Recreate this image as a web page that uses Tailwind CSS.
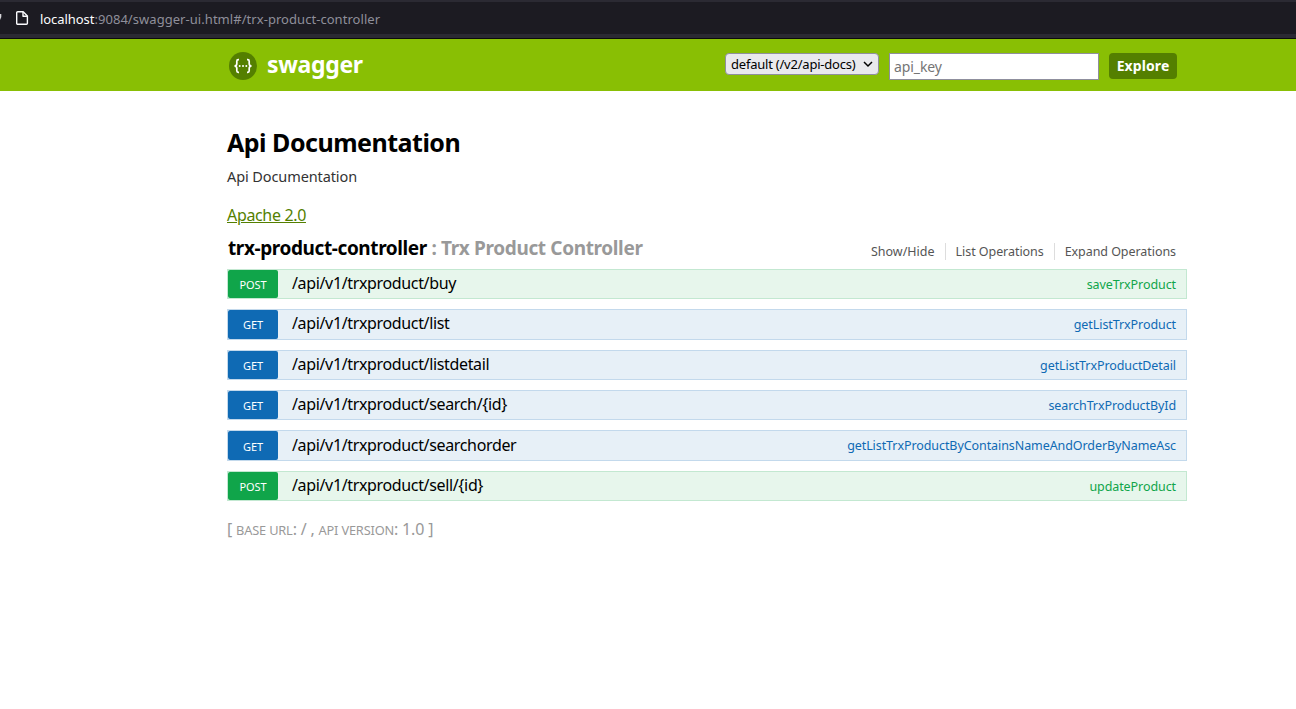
<!DOCTYPE html>
<html lang="en">
<head>
<meta charset="utf-8">
<title>Swagger UI</title>
<script src="https://cdn.jsdelivr.net/npm/@tailwindcss/browser@4"></script>
</head>
<body class="bg-white font-['Noto_Sans',sans-serif] text-black overflow-hidden">
  <!-- Browser address bar -->
  <div class="h-[39px] bg-[#2b2a33] border-b border-[#0c0c0d] pt-0.5">
    <div class="h-8 bg-[#1c1b22] flex items-center">
      <svg class="w-[2px] h-8 shrink-0" viewBox="0 0 2 32"><path d="M0 12h1.300v3L0 18z" fill="#d5d5d9"/></svg>
      <svg class="ml-3 w-4 h-4 shrink-0" viewBox="0 0 16 16" fill="none" stroke="#fbfbfe" stroke-width="1.400" stroke-linejoin="round"><path d="M3.700 1.700h5.500l4.200 4.200v7.400a1 1 0 0 1-1 1H3.700a1 1 0 0 1-1-1V2.700a1 1 0 0 1 1-1z"/><path d="M9 2v4.200h4.200"/></svg>
      <div class="ml-[10px] pt-px text-[13px] leading-8 whitespace-pre text-[#8f8f9a]"><span class="text-[#fbfbfe] tracking-[-0.06px]">localhost</span><span class="tracking-[0.05px]">:9084/swagger-ui.html#/trx-product-controller</span></div>
    </div>
  </div>

  <!-- Swagger header -->
  <header class="h-[52px] bg-[#89bf04]">
    <div class="ml-[227px] w-[950px] h-full pt-px flex items-center">
      <svg class="ml-0.5 w-7 h-7 shrink-0" viewBox="0 0 28 28"><circle cx="14" cy="14" r="14" fill="#547f00"/><g fill="none" stroke="#fff" stroke-width="1.700"><path d="M10 7.700H9.300Q7.800 7.700 7.800 9.200V11.800Q7.800 13.800 5.500 14Q7.800 14.200 7.800 16.200V18.800Q7.800 20.300 9.300 20.300H10"/><path d="M18 7.700h.7q1.500 0 1.500 1.500v2.600q0 2 2.300 2.200q-2.300.2-2.300 2.200v2.600q0 1.500-1.500 1.500H18"/></g><g fill="#fff"><circle cx="10.700" cy="14" r="1"/><circle cx="14" cy="14" r="1"/><circle cx="17.300" cy="14" r="1"/></g></svg>
      <span class="ml-[10px] mb-[3px] text-[23px] leading-[30px] font-bold text-white tracking-[-0.34px]">swagger</span>
      <div class="ml-auto flex items-start h-[26px]">
        <div class="w-[154px] h-[22px] rounded-[4px] border border-[#8f8f9d] bg-[#e9e9ed] flex items-center pl-[5px] pr-[5px]">
          <span class="text-[13px] leading-5 tracking-[-0.22px] whitespace-nowrap">default (/v2/api-docs)</span>
          <svg class="ml-auto w-[10px] h-[10px]" viewBox="0 0 10 10" fill="none" stroke="#000" stroke-width="1.500"><path d="M1 3l4 4 4-4"/></svg>
        </div>
        <div class="ml-[10px] w-[210px] h-[27px] border border-[#8f8f9d] bg-white pl-1 text-[14px] leading-[26px] text-[#757575] tracking-[-0.1px]">api_key</div>
        <div class="ml-[10px] w-[68px] h-[26px] rounded-[4px] bg-[#547f00] text-white font-bold text-[14px] leading-[26px] text-center tracking-[0.1px]">Explore</div>
      </div>
    </div>
  </header>

  <main class="ml-[227px] w-[960px] pt-[33px]">
    <h1 class="text-[25px] leading-9 font-bold tracking-[-0.5px]">Api Documentation</h1>
    <p class="mt-[6px] text-[14.500px] leading-5 text-[#333] tracking-[-0.1px]">Api Documentation</p>
    <a class="block mt-[17px] text-[16px] leading-6 text-[#547f00] underline tracking-[-0.34px]">Apache 2.0</a>

    <div class="mt-[5px] h-[37px] flex justify-between">
      <h2 class="pt-px pl-px text-[19px] leading-[30px] font-bold whitespace-pre"><span class="tracking-[-0.4px]">trx-product-controller</span><span class="text-[#999] tracking-[-0.36px]"> : Trx Product Controller</span></h2>
      <ul class="mt-[11px] mr-[11px] h-[17px] flex text-[12.500px] leading-[17px] text-[#555] whitespace-nowrap">
        <li class="pr-[10px] border-r border-[#ddd]">Show/Hide</li>
        <li class="px-[10px] border-r border-[#ddd] tracking-[-0.06px]">List Operations</li>
        <li class="pl-[10px] tracking-[-0.06px]">Expand Operations</li>
      </ul>
    </div>

    <ul id="operations"></ul>

    <p class="mt-4 text-[16px] leading-6 text-[#999] whitespace-pre tracking-[-0.18px]">[ <span class="text-[12.800px]">BASE URL</span>: / , <span class="text-[12.800px]">API VERSION</span>: 1.0 ]</p>
  </main>

<script>
const styles = {
  POST: { row: 'bg-[#e7f6ec] border-[#c3e8d1]', badge: 'bg-[#10a54a]', name: 'text-[#10a54a]' },
  GET: { row: 'bg-[#e7f0f7] border-[#c3d9ec]', badge: 'bg-[#0f6ab4]', name: 'text-[#0f6ab4]' }
};
const operations = [
  ['POST', 'buy', 'saveTrxProduct', 'h-[30px] mb-[10px]', 'leading-[27px]', 'leading-[30px]'],
  ['GET', 'list', 'getListTrxProduct', 'h-[31px] mb-[10px]', 'leading-[27px]', 'leading-[30px]'],
  ['GET', 'listdetail', 'getListTrxProductDetail', 'h-[30px] mb-[10px]', 'leading-[27px]', 'leading-[30px]'],
  ['GET', 'search/{id}', 'searchTrxProductById', 'h-[30px] mb-[10px]', 'leading-[27px]', 'leading-[30px]'],
  ['GET', 'searchorder', 'getListTrxProductByContainsNameAndOrderByNameAsc', 'h-[31px] mb-[10px]', 'leading-[29px]', 'leading-[32px]'],
  ['POST', 'sell/{id}', 'updateProduct', 'h-[30px]', 'leading-[27px]', 'leading-[30px]']
];
document.getElementById('operations').innerHTML = operations.map(([method, path, name, size, leading, badgeLeading]) => {
  const s = styles[method];
  return `<li class="flex border ${size} ${s.row}">
    <span class="w-[50px] h-full rounded-[2px] text-center text-white text-[11px] tracking-[-0.08px] ${badgeLeading} ${s.badge}">${method}</span>
    <span class="ml-[14px] text-[16px] tracking-[-0.35px] ${leading}">/api/v1/trxproduct/${path}</span>
    <span class="ml-auto mr-[10px] text-[12.500px] leading-[29px] tracking-[-0.08px] ${s.name}">${name}</span>
  </li>`;
}).join('');
</script>
</body>
</html>
